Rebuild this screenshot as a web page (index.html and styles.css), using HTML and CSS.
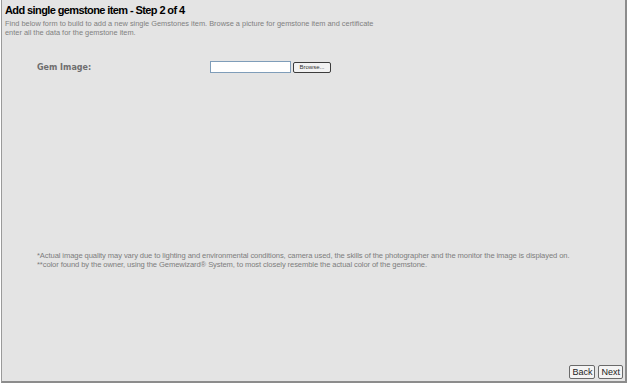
FILE: index.html
```html
<!DOCTYPE html>
<html lang="en">

<head>
    <meta charset="UTF-8">
    <title>Add single gemstone item</title>
    <link rel="stylesheet" href="styles.css">
</head>

<body>
    <div class="wrap">
        <div class="head">
            <h1>Add single gemstone item - Step 2 of 4</h1>
            <p>Find below form to build to add a new single Gemstones item. Browse a picture for gemstone item and certificate<br>enter all the data for the gemstone item.</p>
        </div>

        <div class="row">
            <label class="label">Gem Image:</label>
            <div class="file">
                <span class="file-box"></span>
                <span class="file-btn">Browse...</span>
            </div>
        </div>

        <div class="notes">
            <p>*Actual image quality may vary due to lighting and environmental conditions, camera used, the skills of the photographer and the monitor the image is displayed on.</p>
            <p>**color found by the owner, using the Gemewizard® System, to most closely resemble the actual color of the gemstone.</p>
        </div>

        <div class="nav">
            <span class="btn">Back</span>
            <span class="btn">Next</span>
        </div>
    </div>
</body>

</html>
```

FILE: styles.css
```css
html,
body {
    margin: 0;
    background-color: #ffffff;
}

.wrap {
    width: 626px;
    height: 383px;
    margin-left: 1px;
    box-sizing: border-box;
    border-left: 1px solid #9a9a9a;
    border-right: 2px solid #8c8c8c;
    border-bottom: 2px solid #8c8c8c;
    background-color: #e4e4e4;
    font-family: "Liberation Sans", Arial, sans-serif;
    display: flex;
    flex-direction: column;
}

.head {
    padding: 3px 0 0 3px;
}

.head h1 {
    margin: 0;
    font-size: 11px;
    line-height: 14px;
    letter-spacing: -0.6px;
    color: #000000;
}

.head p {
    margin: 2px 0 0 0;
    font-size: 7.4px;
    line-height: 9px;
    color: #808080;
}

.row {
    display: flex;
    align-items: center;
    margin-top: 24px;
    padding-left: 35px;
}

.label {
    width: 173px;
    font-family: "DejaVu Sans", Verdana, sans-serif;
    font-size: 8px;
    font-weight: bold;
    color: #6e6e6e;
}

.file {
    display: flex;
    align-items: center;
    gap: 2px;
}

.file-box {
    width: 79px;
    height: 10px;
    background-color: #ffffff;
    border: 1px solid #7f9db9;
}

.file-btn {
    width: 36px;
    height: 9px;
    line-height: 9px;
    font-size: 6px;
    text-align: center;
    color: #333333;
    background-color: #f2f2f2;
    border: 1px solid #3c3c3c;
    border-radius: 2px;
}

.notes {
    margin-top: 178px;
    padding-left: 35px;
}

.notes p {
    margin: 0;
    font-size: 7.6px;
    line-height: 9px;
    color: #7d7d7d;
    letter-spacing: -0.1px;
}

.nav {
    margin-top: auto;
    display: flex;
    justify-content: flex-end;
    gap: 3px;
    padding: 0 2px 2px 0;
}

.btn {
    height: 12px;
    line-height: 12px;
    padding: 0 2px;
    font-size: 9px;
    color: #222222;
    background-color: #f4f4f4;
    border: 1px solid #6a6a6a;
    border-radius: 2px;
}
```
